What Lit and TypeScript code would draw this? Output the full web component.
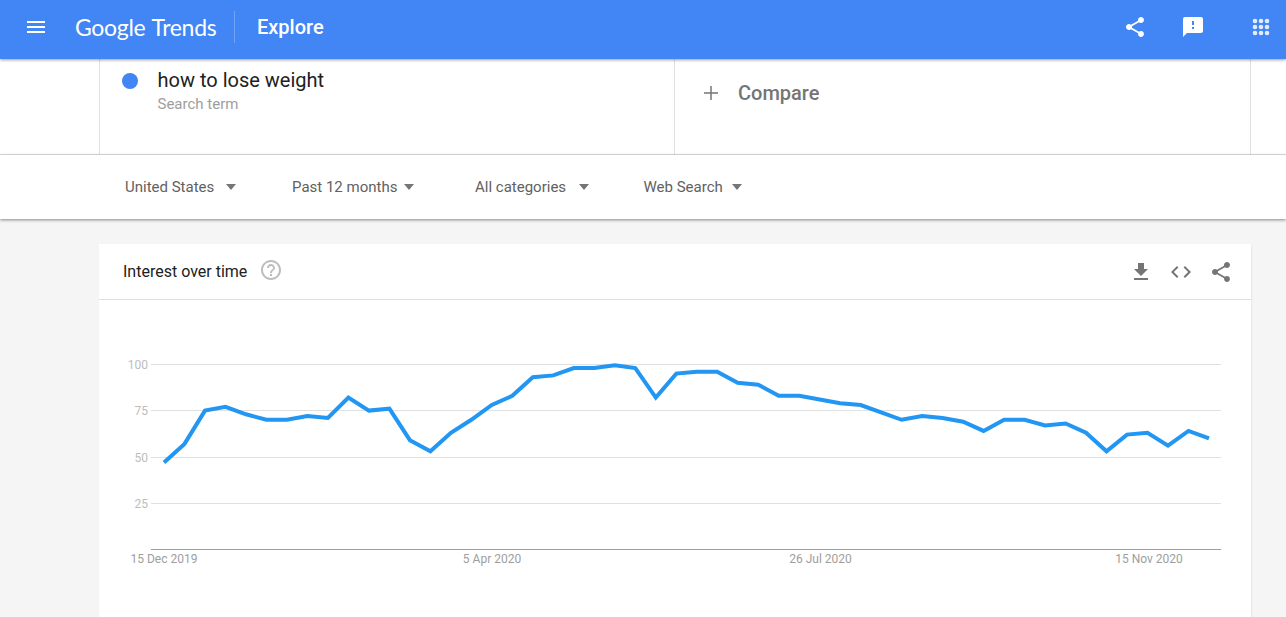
import { LitElement, html, svg, css } from 'lit';
import { customElement } from 'lit/decorators.js';

const SHARE = 'M18 16.08c-.76 0-1.44.3-1.96.77L8.91 12.7c.05-.23.09-.46.09-.7s-.04-.47-.09-.7l7.05-4.11c.54.5 1.25.81 2.04.81 1.66 0 3-1.34 3-3s-1.34-3-3-3-3 1.34-3 3c0 .24.04.47.09.7L8.04 9.81C7.5 9.31 6.79 9 6 9c-1.66 0-3 1.34-3 3s1.34 3 3 3c.79 0 1.5-.31 2.04-.81l7.12 4.16c-.05.21-.08.43-.08.65 0 1.61 1.31 2.92 2.92 2.92 1.61 0 2.92-1.31 2.92-2.92s-1.31-2.92-2.92-2.92z';
const MENU = 'M3 18h18v-2H3v2zm0-5h18v-2H3v2zm0-7v2h18V6H3z';
const FEEDBACK = 'M20 2H4c-1.1 0-1.99.9-1.99 2L2 22l4-4h14c1.1 0 2-.9 2-2V4c0-1.1-.9-2-2-2zm-7 12h-2v-2h2v2zm0-4h-2V6h2v4z';
const HELP = 'M11 18h2v-2h-2v2zm1-16C6.48 2 2 6.48 2 12s4.48 10 10 10 10-4.48 10-10S17.52 2 12 2zm0 18c-4.41 0-8-3.59-8-8s3.59-8 8-8 8 3.59 8 8-3.59 8-8 8zm0-14c-2.21 0-4 1.79-4 4h2c0-1.1.9-2 2-2s2 .9 2 2c0 2-3 1.75-3 5h2c0-2.25 3-2.5 3-5 0-2.21-1.79-4-4-4z';
const DOWNLOAD = 'M19 9h-4V3H9v6H5l7 7 7-7zM5 18v2h14v-2H5z';
const CODE = 'M9.4 16.6L4.8 12l4.6-4.6L8 6l-6 6 6 6 1.4-1.4zm5.2 0l4.6-4.6-4.6-4.6L16 6l6 6-6 6-1.4-1.4z';
const PLUS = 'M19 12.75h-6.25V19h-1.5v-6.25H5v-1.5h6.25V5h1.5v6.25H19z';

const VALUES = [
    47, 57, 75, 77, 73, 70, 70, 72, 71, 82, 75, 76, 59, 53, 63, 70, 78, 83, 93, 94, 98, 98, 99.5, 98, 82, 95,
    96, 96, 90, 89, 83, 83, 81, 79, 78, 74, 70, 72, 71, 69, 64, 70, 70, 67, 68, 63, 53, 62, 63, 56, 64, 60,
];

const FILTERS = [
    { label: 'United States', width: 167, gap: 12 },
    { label: 'Past 12 months', width: 183, gap: 7 },
    { label: 'All categories', width: 168.5, gap: 13 },
    { label: 'Web Search', width: 110, gap: 9 },
];

const TICKS = [100, 75, 50, 25];
const DATES = [
    { label: '15 Dec 2019', x: 65 },
    { label: '5 Apr 2020', x: 393 },
    { label: '26 Jul 2020', x: 721.5 },
    { label: '15 Nov 2020', x: 1050 },
];

// chart coordinates are relative to the card body (card starts at x 99, body at y 300)
const yFor = (v: number) => 249.3 - v * 1.85;
const xFor = (i: number) => 65 + i * 20.49;
const gridY = (v: number) => Math.round(249 - v * 1.85) + 0.5;

const icon = (d: string) => html`<svg class="icon" viewBox="0 0 24 24"><path d=${d}></path></svg>`;

@customElement('app-root')
export class AppRoot extends LitElement {
    renderChart() {
        const points = VALUES.map((v, i) => `${xFor(i).toFixed(1)},${yFor(v).toFixed(1)}`).join(' ');
        return html`
            <svg class="chart" viewBox="0 0 1152 320">
                ${TICKS.map((t) => svg`
                    <line class="grid" x1="52" x2="1122" y1=${gridY(t)} y2=${gridY(t)}></line>
                    <text class="tick" x="49" y=${gridY(t) + 4}>${t}</text>
                `)}
                <line class="axis" x1="52" x2="1122" y1="249.5" y2="249.5"></line>
                ${DATES.map((d) => svg`<text class="date" x=${d.x} y="263">${d.label}</text>`)}
                <polyline class="trend" points=${points}></polyline>
            </svg>
        `;
    }

    render() {
        return html`
            <header class="topbar">
                <button class="btn menu">${icon(MENU)}</button>
                <div class="logo"><span>Google</span><span>Trends</span></div>
                <div class="divider"></div>
                <div class="page-title">Explore</div>
                <div class="top-actions">
                    <button class="btn">${icon(SHARE)}</button>
                    <button class="btn">${icon(FEEDBACK)}</button>
                    <button class="btn apps-btn">
                        <svg class="icon apps" viewBox="0 0 24 24">
                            ${[6, 12, 18].map((y) => [6, 12, 18].map((x) => svg`<circle cx=${x} cy=${y} r="2.3"></circle>`))}
                        </svg>
                    </button>
                </div>
            </header>

            <section class="search-row">
                <div class="search-inner">
                    <div class="term">
                        <span class="dot"></span>
                        <div>
                            <div class="term-name">how to lose weight</div>
                            <div class="term-type">Search term</div>
                        </div>
                    </div>
                    <div class="compare">
                        ${icon(PLUS)}
                        <span>Compare</span>
                    </div>
                </div>
            </section>

            <section class="filters">
                ${FILTERS.map((f) => html`
                    <div class="filter" style="width:${f.width}px">
                        <span>${f.label}</span>
                        <span class="arrow" style="margin-left:${f.gap}px"></span>
                    </div>
                `)}
            </section>

            <section class="card">
                <div class="card-head">
                    <span class="card-title">Interest over time</span>
                    <span class="help">${icon(HELP)}</span>
                    <div class="card-actions">
                        ${icon(DOWNLOAD)}
                        ${icon(CODE)}
                        ${icon(SHARE)}
                    </div>
                </div>
                ${this.renderChart()}
            </section>
        `;
    }

    static styles = css`
        :host {
            display: block;
            height: 617px;
            overflow: hidden;
            background-color: #f5f5f5;
            font-family: Roboto, sans-serif;
        }

        .icon {
            display: block;
            width: 24px;
            height: 24px;
            fill: currentColor;
        }

        .btn {
            display: flex;
            padding: 0;
            border: none;
            background: transparent;
            color: inherit;
        }

        /* top bar */
        .topbar {
            position: relative;
            z-index: 2;
            display: flex;
            align-items: center;
            box-sizing: border-box;
            height: 59px;
            padding: 0 0 5px 24px;
            background-color: #4285f4;
            color: #fff;
            box-shadow: 0 1px 3px rgba(0, 0, 0, 0.4);
        }

        .logo {
            display: flex;
            gap: 6px;
            width: 142px;
            margin-left: 27px;
            font-family: Lato, sans-serif;
            font-size: 23px;
            letter-spacing: -0.3px;
        }

        .divider {
            width: 1px;
            height: 32px;
            margin-left: 17px;
            background-color: rgba(255, 255, 255, 0.25);
        }

        .page-title {
            margin-left: 22px;
            margin-top: -1px;
            font-size: 20px;
            font-weight: 500;
        }

        .top-actions {
            display: flex;
            gap: 34px;
            margin-left: auto;
            padding-right: 13px;
        }

        .apps-btn {
            margin-left: 10px;
        }

        .apps {
            opacity: 0.85;
        }

        /* search terms */
        .search-row {
            height: 95px;
            background-color: #fff;
            border-bottom: 1px solid #e0e0e0;
        }

        .search-inner {
            display: flex;
            height: 100%;
            width: 1152px;
            margin-left: 99px;
            box-sizing: border-box;
            border-left: 1px solid #e0e0e0;
            border-right: 1px solid #e0e0e0;
        }

        .term {
            display: flex;
            gap: 19.5px;
            width: 575px;
            box-sizing: border-box;
            padding: 9px 0 0 22px;
            border-right: 1px solid #e0e0e0;
        }

        .dot {
            flex: none;
            width: 16px;
            height: 16px;
            margin-top: 5px;
            border-radius: 50%;
            background-color: #4285f4;
        }

        .term-name {
            font-size: 20px;
            line-height: 24px;
            color: #212121;
        }

        .term-type {
            margin-top: 3px;
            font-size: 15px;
            line-height: 18px;
            color: #9e9e9e;
        }

        .compare {
            display: flex;
            align-items: center;
            gap: 15px;
            height: 68px;
            padding-left: 24px;
            color: #757575;
            font-size: 20px;
            font-weight: 500;
        }

        /* filters */
        .filters {
            position: relative;
            z-index: 1;
            display: flex;
            align-items: center;
            height: 64px;
            padding-left: 125px;
            background-color: #fff;
            box-shadow: 0 1px 3px rgba(0, 0, 0, 0.45);
            font-size: 15px;
            color: #616161;
        }

        .filter {
            display: flex;
            align-items: center;
        }

        .arrow {
            width: 0;
            height: 0;
            border-left: 5.5px solid transparent;
            border-right: 5.5px solid transparent;
            border-top: 6px solid #757575;
        }

        /* card */
        .card {
            width: 1152px;
            height: 420px;
            margin: 25px 0 0 99px;
            background-color: #fff;
            box-shadow: 1px 1px 2px rgba(0, 0, 0, 0.06);
        }

        .card-head {
            display: flex;
            align-items: center;
            height: 55px;
            padding-left: 24px;
            border-bottom: 1px solid #e0e0e0;
        }

        .card-title {
            font-size: 16px;
            color: #212121;
        }

        .help {
            margin-left: 12px;
            margin-top: -3px;
            color: #bdbdbd;
        }

        .card-actions {
            display: flex;
            gap: 16px;
            margin-left: auto;
            padding-right: 18px;
            color: #757575;
        }

        .chart {
            display: block;
            width: 1152px;
            height: 320px;
        }

        .grid {
            stroke: #e0e0e0;
            stroke-width: 1;
        }

        .axis {
            stroke: #9e9e9e;
            stroke-width: 1;
        }

        .tick {
            fill: #bdbdbd;
            font-size: 12px;
            text-anchor: end;
        }

        .date {
            fill: #9e9e9e;
            font-size: 12px;
            text-anchor: middle;
        }

        .trend {
            fill: none;
            stroke: #2196f3;
            stroke-width: 4;
            stroke-linejoin: miter;
        }
    `;
}
